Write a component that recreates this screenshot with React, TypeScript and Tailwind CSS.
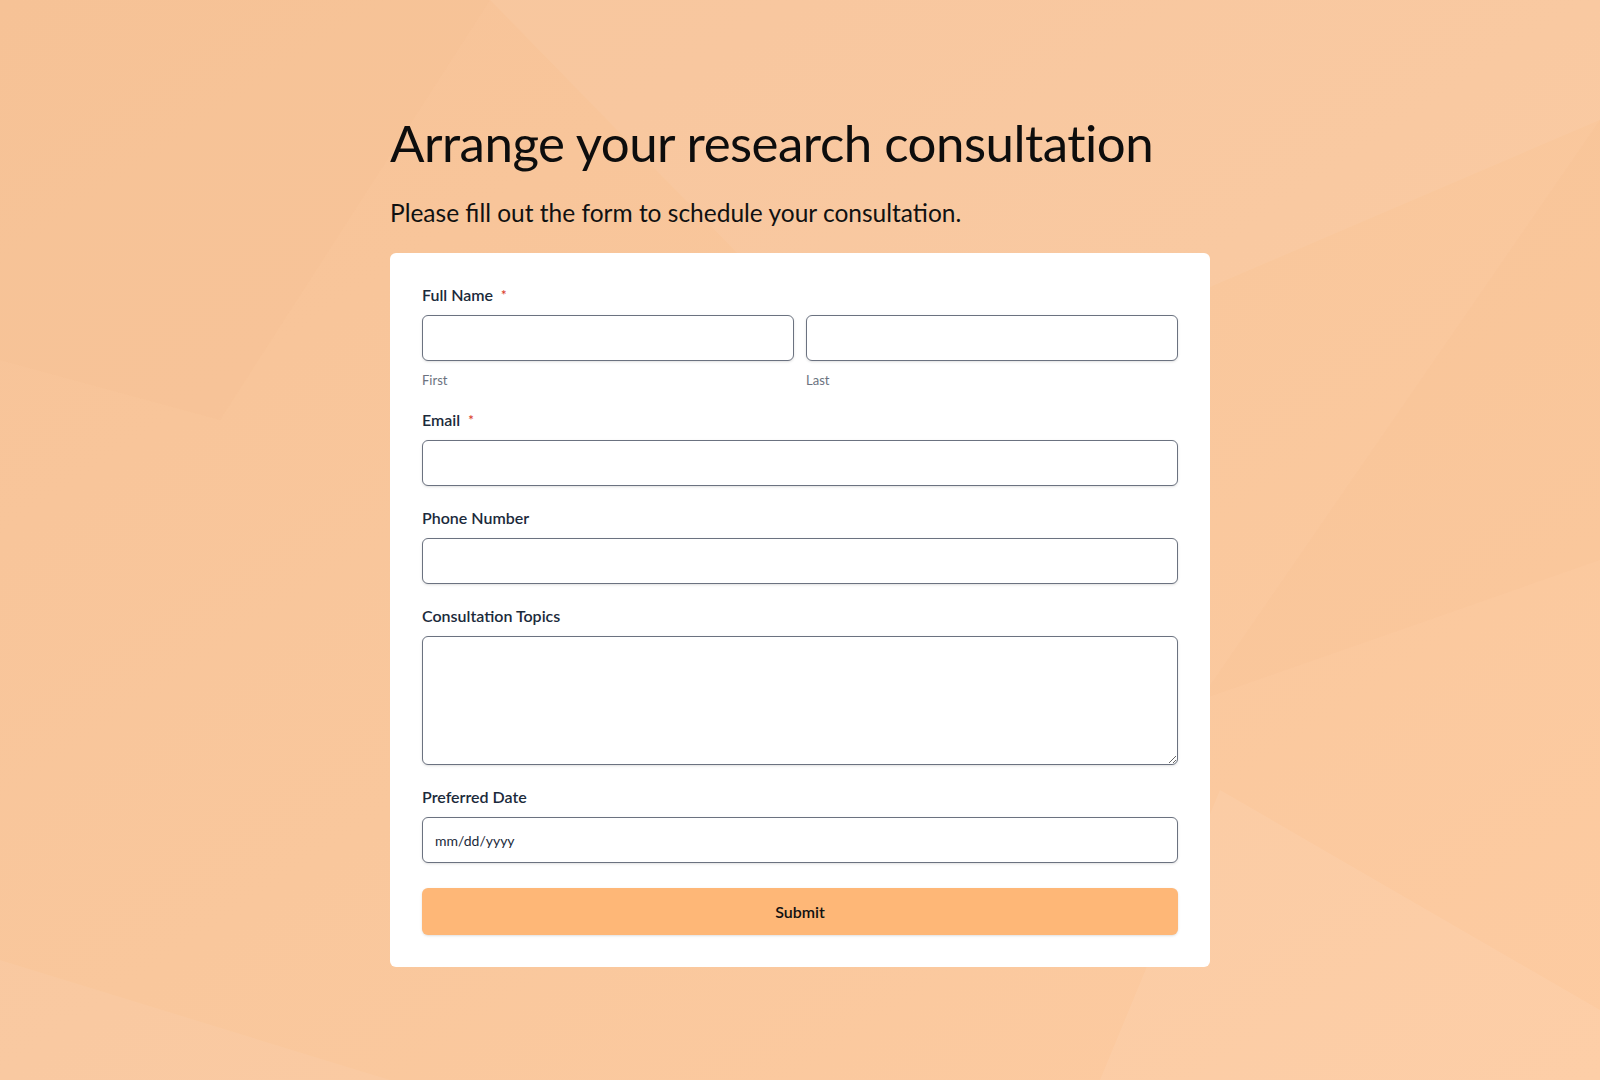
import React from 'react';

const font = { fontFamily: 'Lato, "Noto Sans", sans-serif' };

function Label({ text, required }: { text: string; required?: boolean }) {
  return (
    <div className="mb-2.5 flex items-center gap-2 text-[16px] leading-5 font-semibold text-[#1b2a3b]">
      {text}
      {required && <span className="text-[13px] text-[#d9402b]">*</span>}
    </div>
  );
}

const inputCls =
  'block w-full h-[46px] rounded-md border border-[#6b7280] bg-white px-3 text-[14px] text-[#1b2a3b] shadow-sm outline-none';

export default function App() {
  return (
    <div
      className="relative min-h-screen w-full overflow-hidden bg-gradient-to-br from-[#f7c398] via-[#f9c79c] to-[#fdcba1]"
      style={font}
    >
      {/* faint background facets */}
      <svg className="pointer-events-none absolute inset-0 h-full w-full" viewBox="0 0 1600 1080" preserveAspectRatio="none">
        <polygon points="490,0 1600,0 1600,120 900,420" fill="#ffffff" fillOpacity="0.05" />
        <polygon points="1600,120 1600,560 1200,700" fill="#e9a878" fillOpacity="0.06" />
        <polygon points="1220,790 1600,1010 1600,1080 1100,1080" fill="#ffffff" fillOpacity="0.07" />
        <polygon points="0,0 490,0 220,420 0,360" fill="#e9a878" fillOpacity="0.05" />
        <polygon points="0,960 390,1080 0,1080" fill="#ffffff" fillOpacity="0.05" />
      </svg>

      <div className="relative mx-auto w-[820px] pt-[114px]">
        <h1 className="text-[51px] leading-[58px] font-normal tracking-[-0.01em] text-[#0d0d0d]">
          Arrange your research consultation
        </h1>
        <p className="mt-[25px] text-[24.5px] leading-8 text-[#111]">
          Please fill out the form to schedule your consultation.
        </p>

        <form className="mt-[24px] rounded-md bg-white px-8 pt-8 pb-8">
          <Label text="Full Name" required />
          <div className="grid grid-cols-2 gap-3">
            <div>
              <input className={inputCls} />
              <div className="mt-[11px] text-[13px] leading-4 text-[#6b7280]">First</div>
            </div>
            <div>
              <input className={inputCls} />
              <div className="mt-[11px] text-[13px] leading-4 text-[#6b7280]">Last</div>
            </div>
          </div>

          <div className="mt-[22px]">
            <Label text="Email" required />
            <input className={inputCls} />
          </div>

          <div className="mt-[22px]">
            <Label text="Phone Number" />
            <input className={inputCls} />
          </div>

          <div className="mt-[22px]">
            <Label text="Consultation Topics" />
            <textarea className="block h-[129px] w-full rounded-md border border-[#6b7280] bg-white px-3 py-2 text-[14px] shadow-sm outline-none" />
          </div>

          <div className="mt-[22px]">
            <Label text="Preferred Date" />
            <input className={inputCls + ' placeholder:text-[#1b2a3b]'} placeholder="mm/dd/yyyy" />
          </div>

          <button
            type="button"
            className="mt-[25px] block h-[47px] w-full rounded-md bg-[#feb777] text-[16px] font-semibold text-[#111] shadow-sm"
          >
            Submit
          </button>
        </form>
      </div>
    </div>
  );
}
